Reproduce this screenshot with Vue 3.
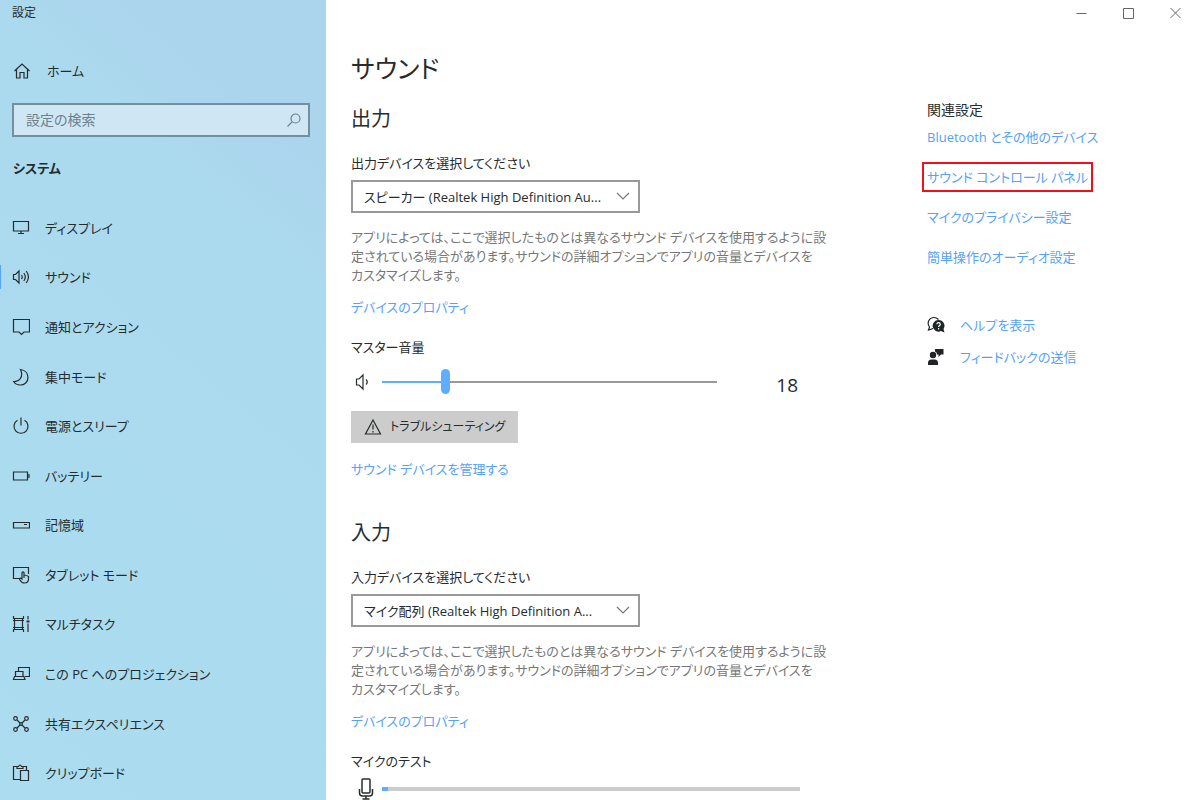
<script setup>
import { ref, computed } from "vue";

const menuItems = [
  { id: "display", label: "ディスプレイ" },
  { id: "sound", label: "サウンド" },
  { id: "notification", label: "通知とアクション" },
  { id: "focus", label: "集中モード" },
  { id: "power", label: "電源とスリープ" },
  { id: "battery", label: "バッテリー" },
  { id: "storage", label: "記憶域" },
  { id: "tablet", label: "タブレット モード" },
  { id: "multitask", label: "マルチタスク" },
  { id: "projection", label: "この PC へのプロジェクション" },
  { id: "shared", label: "共有エクスペリエンス" },
  { id: "clipboard", label: "クリップボード" },
];

const relatedLinks = [
  { id: 1, label: "Bluetooth とその他のデバイス" },
  { id: 2, label: "サウンド コントロール パネル", marked: true },
  { id: 3, label: "マイクのプライバシー設定" },
  { id: 4, label: "簡単操作のオーディオ設定" },
];

const outputDevices = ["スピーカー (Realtek High Definition Au..."];
const inputDevices = ["マイク配列 (Realtek High Definition A..."];

const description = [
  "アプリによっては、ここで選択したものとは異なるサウンド デバイスを使用するように設",
  "定されている場合があります。サウンドの詳細オプションでアプリの音量とデバイスを",
  "カスタマイズします。",
].join("\n");

const searchQuery = ref("");
const activeMenu = ref("sound");
const outputDevice = ref(outputDevices[0]);
const inputDevice = ref(inputDevices[0]);
const volume = ref(18);
const micLevel = ref(1.5);

const volumeStyle = computed(() => ({ "--level": `${volume.value}%` }));
const micStyle = computed(() => ({ width: `${micLevel.value}%` }));
</script>

<template>
  <div class="window">
    <aside class="sidebar">
      <div class="window-title">設定</div>

      <a href="#home" class="home">
        <svg class="icon" viewBox="0 0 18 18">
          <path d="M1.5 9 9 2l7.500 7M3.500 7.500V16h3.500v-5.500h4V16h3.500V7.500" />
        </svg>
        <span>ホーム</span>
      </a>

      <div class="search">
        <input
          v-model="searchQuery"
          type="text"
          placeholder="設定の検索"
          aria-label="設定の検索"
        />
        <svg class="search-icon" viewBox="0 0 14 14">
          <circle cx="8.500" cy="5.500" r="4.500" />
          <path d="M5.300 8.700.5 13.500" />
        </svg>
      </div>

      <h2 class="group-title">システム</h2>

      <nav class="menu">
        <a
          v-for="item in menuItems"
          :key="item.id"
          :href="`#${item.id}`"
          class="menu-item"
          :class="{ active: activeMenu === item.id }"
          @click.prevent="activeMenu = item.id"
        >
          <svg class="icon" viewBox="0 0 18 18">
            <path v-if="item.id === 'display'" d="M1.500 2.500h15v9.500h-15zM9 12v2M6 14.500h6" />
            <g v-else-if="item.id === 'sound'">
              <path d="M1.500 6.500h2L7 3v12l-3.500-3.500h-2z" />
              <path d="M9.500 7q1.500 2 0 4M11.800 5q3 4 0 8M14.200 3q4.500 6 0 12" />
            </g>
            <path v-else-if="item.id === 'notification'" d="M1.500 1.500h16v12.500h-5.500l-2.500 2.500-2.500-2.500H1.500z" />
            <path v-else-if="item.id === 'focus'" d="M8.500 1.500c4.500.5 7.500 3.800 7.500 8 0 4.500-3.500 7.500-7.800 7.500-3 0-5.200-1.300-6.500-3.500C7 14 12 9 8.500 1.500z" />
            <path v-else-if="item.id === 'power'" d="M9 .5v8M5.500 3.200a7 7 0 1 0 7 0" />
            <path v-else-if="item.id === 'battery'" d="M1.500 5h14v8h-14zM17 7v4" />
            <path v-else-if="item.id === 'storage'" d="M1.500 6.500h16v5.500h-16zM12 8.500h3" />
            <g v-else-if="item.id === 'tablet'">
              <path d="M8 12.500H1.500v-11h15V8" />
              <path d="M12 12V6.500q-1.200-1.200-2 0V13l-1.500-.8q-1.300.3-.7 1.500c1 1.800 2 3.300 4.700 3.300s4-1.500 4-4v-2.500q-2-1.500-4.500-1.500" />
            </g>
            <g v-else-if="item.id === 'multitask'">
              <path d="M1.500 1v2.500h10V1M1.500 17v-2.500h10V17M2.500 3.500v11M10.500 3.500v11M1 5.500h11M1 12.500h11M16 1v3.500M16 8.500V17" />
              <path class="solid" d="M14.500 5.500h3v2h-3z" />
            </g>
            <path v-else-if="item.id === 'projection'" d="M6.500 7V2.500h11v9H13M3.500 11.500v-5h7.500v5M2.500 11.500h9.500l1 3H1.500z" />
            <g v-else-if="item.id === 'shared'">
              <circle cx="3.500" cy="3.500" r="1.800" />
              <circle cx="14.500" cy="3.500" r="1.800" />
              <circle cx="3.500" cy="14.500" r="1.800" />
              <circle cx="14.500" cy="14.500" r="1.800" />
              <circle cx="9" cy="9" r="1.300" />
              <path d="m5 5 3 3M13 5l-3 3M5 13l3-3M13 13l-3-3" />
            </g>
            <path v-else d="M8.500 15.500h-7v-13H5M11 2.500h3.500V6M5 4.500v-2h1.500q1.500-3 3 0H11v2zM8.500 6.500h8v10h-8z" />
          </svg>
          <span>{{ item.label }}</span>
        </a>
      </nav>
    </aside>

    <main class="content">
      <h1 class="page-title">サウンド</h1>

      <section class="section">
        <h2 class="section-title">出力</h2>

        <label class="label" for="output-device">出力デバイスを選択してください</label>
        <div class="select">
          <select id="output-device" v-model="outputDevice">
            <option v-for="device in outputDevices" :key="device" :value="device">
              {{ device }}
            </option>
          </select>
          <svg class="chevron" viewBox="0 0 14 8"><path d="m1 1 6 6 6-6" /></svg>
        </div>
        <p class="description">{{ description }}</p>
        <a href="#output-properties" class="link">デバイスのプロパティ</a>

        <label class="label field" for="volume">マスター音量</label>
        <div class="volume">
          <svg class="volume-icon" viewBox="0 0 18 18">
            <path d="M2.500 6h2.500l4-4v14L5 12H2.500z" />
            <path d="M12 6.500q2.500 2.500 0 5" />
          </svg>
          <input
            id="volume"
            v-model="volume"
            type="range"
            min="0"
            max="100"
            :style="volumeStyle"
          />
          <span class="volume-value">{{ volume }}</span>
        </div>

        <button type="button" class="button">
          <svg class="icon" viewBox="0 0 18 18">
            <path d="M9 2 16.500 16h-15zM9 6.500v5M9 13v1.500" />
          </svg>
          <span>トラブルシューティング</span>
        </button>
        <a href="#manage" class="link">サウンド デバイスを管理する</a>
      </section>

      <section class="section">
        <h2 class="section-title">入力</h2>

        <label class="label" for="input-device">入力デバイスを選択してください</label>
        <div class="select">
          <select id="input-device" v-model="inputDevice">
            <option v-for="device in inputDevices" :key="device" :value="device">
              {{ device }}
            </option>
          </select>
          <svg class="chevron" viewBox="0 0 14 8"><path d="m1 1 6 6 6-6" /></svg>
        </div>
        <p class="description">{{ description }}</p>
        <a href="#input-properties" class="link">デバイスのプロパティ</a>

        <div class="label field">マイクのテスト</div>
        <div class="mic">
          <svg class="mic-icon" viewBox="0 0 18 22">
            <rect x="5" y="1" width="8" height="14" rx="1" />
            <path d="M2.500 11v4q0 3 3 3h7q3 0 3-3v-4M9 18v3M5.500 21h7" />
          </svg>
          <div class="meter"><div class="meter-fill" :style="micStyle"></div></div>
        </div>
      </section>
    </main>

    <aside class="side">
      <div class="caption">
        <button type="button" aria-label="最小化">
          <svg viewBox="0 0 12 12"><path d="M.5 6.500h10" /></svg>
        </button>
        <button type="button" aria-label="最大化">
          <svg viewBox="0 0 12 12"><path d="M.5 1.500h10v10H.5z" /></svg>
        </button>
        <button type="button" aria-label="閉じる">
          <svg viewBox="0 0 12 12"><path d="m.5 1 10 10M10.500 1l-10 10" /></svg>
        </button>
      </div>

      <div class="related">
        <h2 class="related-title">関連設定</h2>
        <ul class="related-list">
          <li v-for="item in relatedLinks" :key="item.id">
            <a href="#related" class="link" :class="{ marked: item.marked }">{{ item.label }}</a>
          </li>
        </ul>
      </div>

      <div class="support">
        <a href="#help" class="link support-link">
          <svg viewBox="0 0 18 18">
            <path d="M6 12.500 1.500 14l1-3C-.5 7 2 1.500 7 1.500c2 0 3.500 1 4.500 2" />
            <path class="solid" d="M11.500 4a5.800 5.800 0 1 0 2.500 11l3.500 1.500-1-3.500A5.800 5.800 0 0 0 11.500 4z" />
            <path class="mark" d="M9.800 8.300q.2-1.600 1.800-1.600t1.700 1.500c0 1.300-1.700 1.300-1.700 2.800M11.600 12v1.400" />
          </svg>
          <span>ヘルプを表示</span>
        </a>
        <a href="#feedback" class="link support-link">
          <svg viewBox="0 0 18 18">
            <circle class="solid" cx="6" cy="7" r="3.200" />
            <path class="solid" d="M1 17v-2q0-3.500 3.500-3.500h3q3.500 0 3.500 3.500v2zM8 1h8.500v5.500H14L11.500 9V6.500H10Q10 4 8 3.500z" />
          </svg>
          <span>フィードバックの送信</span>
        </a>
      </div>
    </aside>
  </div>
</template>

<style>
body {
  margin: 0;
}
</style>

<style scoped>
* {
  box-sizing: border-box;
}

.window {
  display: grid;
  grid-template-columns: 326px 1fr 270px;
  height: 100vh;
  overflow: hidden;
  background: #fff;
  color: #262c2e;
  font-family: "Open Sans", "Noto Sans CJK JP", sans-serif;
  font-size: 13px;
  line-height: 20px;
  font-feature-settings: "palt";
}

h1,
h2,
p,
ul {
  margin: 0;
  padding: 0;
  font-weight: 400;
}

a {
  color: inherit;
  text-decoration: none;
}

svg {
  flex-shrink: 0;
  fill: none;
  stroke: currentColor;
  stroke-width: 1.2;
}

.icon {
  width: 18px;
  height: 18px;
}

.solid {
  fill: currentColor;
  stroke: none;
}

/* サイドバー */
.sidebar {
  display: flex;
  flex-direction: column;
  min-height: 0;
  padding-bottom: 2px;
  background: linear-gradient(220deg, #abd4ed 0, #abd5ed 130px, #abdaee 240px, #abdcf0 100%);
}

.window-title {
  padding: 3px 12px;
  font-size: 12px;
}

.home {
  display: flex;
  align-items: center;
  gap: 16px;
  margin-top: 35px;
  padding: 0 13px;
}

.search {
  display: flex;
  align-items: center;
  height: 34px;
  margin: 22px 16px 0 12px;
  padding-right: 7px;
  border: 2px solid #72909d;
  background: #cfe7f5;
}

.search input {
  flex: 1;
  min-width: 0;
  height: 30px;
  padding: 0 12px 2px;
  border: 0;
  outline: none;
  background: transparent;
  color: inherit;
  font: inherit;
  font-size: 14px;
  font-feature-settings: inherit;
}

.search input::placeholder {
  color: #6b818b;
  opacity: 1;
}

.search-icon {
  width: 14px;
  height: 14px;
  color: #6b818b;
}

.group-title {
  margin: 21px 13px 0;
  font-size: 13px;
  font-weight: 600;
  line-height: 20px;
}

.menu {
  display: grid;
  flex: 1;
  grid-auto-rows: 1fr;
  margin-top: 25px;
}

.menu-item {
  display: flex;
  align-items: center;
  gap: 15px;
  min-height: 24px;
  padding-left: 12px;
  position: relative;
}

.menu-item.active::before {
  content: "";
  position: absolute;
  left: 0;
  width: 1px;
  height: 24px;
  background: #5aa5fb;
}

/* メイン */
.content {
  min-width: 0;
  padding: 48px 25px 0;
}

.page-title {
  font-size: 25px;
  line-height: 40px;
}

.section {
  margin-top: 39px;
}

.page-title + .section {
  margin-top: 16px;
}

.section-title {
  margin-bottom: 19px;
  font-size: 20px;
  line-height: 30px;
}

.label {
  display: block;
}

.field {
  margin-top: 20px;
}

.link {
  color: #55a2f8;
}

.section > .link {
  display: table;
}

.select {
  display: flex;
  position: relative;
  width: 289px;
  margin-top: 7px;
}

.select select {
  width: 100%;
  height: 33px;
  padding: 0 32px 0 11px;
  border: 2px solid #999;
  border-radius: 0;
  outline: none;
  appearance: none;
  background: #fff;
  color: inherit;
  font: inherit;
  font-feature-settings: inherit;
}

.chevron {
  position: absolute;
  top: 12px;
  right: 10px;
  width: 14px;
  height: 8px;
  color: #777;
  pointer-events: none;
}

.description {
  margin: 15px 0 12px;
  color: #777;
  line-height: 19px;
  white-space: pre;
}

.volume {
  display: flex;
  align-items: center;
  height: 26px;
  margin-top: 12px;
  padding-left: 3px;
}

.volume-icon {
  width: 18px;
  height: 18px;
  margin-right: 10px;
}

.volume input {
  width: 335px;
  height: 26px;
  margin: 0;
  appearance: none;
  background: transparent;
}

.volume input::-webkit-slider-runnable-track {
  height: 2px;
  background: linear-gradient(to right, #5fadff var(--level), #999 var(--level));
}

.volume input::-webkit-slider-thumb {
  width: 9px;
  height: 25px;
  margin-top: -12px;
  border-radius: 5px;
  appearance: none;
  background: #5fadff;
}

.volume-value {
  width: 81px;
  padding-top: 6px;
  font-size: 19px;
  text-align: right;
}

.button {
  display: flex;
  align-items: center;
  gap: 8px;
  height: 32px;
  margin: 16px 0;
  padding: 0 13px;
  border: 0;
  background: #ccc;
  color: inherit;
  font: inherit;
  font-size: 12px;
  font-feature-settings: inherit;
}

.mic {
  display: flex;
  align-items: center;
  gap: 7px;
  margin-top: 7px;
  padding-left: 6px;
}

.mic-icon {
  width: 18px;
  height: 22px;
  stroke-width: 1.5;
}

.meter {
  width: 418px;
  height: 4px;
  background: #ccc;
}

.meter-fill {
  height: 4px;
  background: #5fadff;
}

/* 右カラム */
.side {
  padding-left: 5px;
}

.caption {
  display: flex;
  justify-content: flex-end;
  margin-right: -7px;
}

.caption button {
  display: flex;
  align-items: center;
  justify-content: center;
  width: 47px;
  height: 26px;
  padding: 0;
  border: 0;
  background: transparent;
  color: #666;
}

.caption svg {
  width: 12px;
  height: 12px;
  stroke-width: 1;
}

.related {
  margin-top: 74px;
}

.related-title {
  font-size: 14px;
  line-height: 20px;
}

.related-list {
  display: grid;
  grid-auto-rows: 40px;
  align-items: center;
  margin-top: -3px;
  list-style: none;
}

.related-list li {
  display: flex;
}

.marked {
  margin-left: -5px;
  padding: 3px;
  border: 2px solid #f0101c;
}

.support {
  display: grid;
  gap: 12px;
  margin-top: 38px;
}

.support-link {
  display: flex;
  align-items: center;
  gap: 15px;
}

.support-link svg {
  width: 18px;
  height: 18px;
  color: #1f2426;
}

.support-link .mark {
  stroke: #fff;
}
</style>
